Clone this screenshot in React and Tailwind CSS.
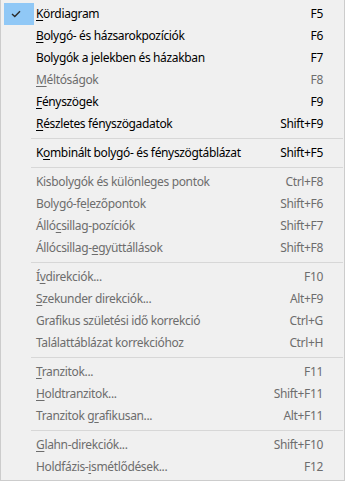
import React from "react";

const items = [
  { label: "Kördiagram", u: 0, key: "F5", checked: true },
  { label: "Bolygó- és házsarokpozíciók", u: 0, key: "F6" },
  { label: "Bolygók a jelekben és házakban", u: 10, key: "F7" },
  { label: "Méltóságok", u: 0, key: "F8", disabled: true },
  { label: "Fényszögek", u: 0, key: "F9" },
  { label: "Részletes fényszögadatok", u: 0, key: "Shift+F9" },
  "sep",
  { label: "Kombinált bolygó- és fényszögtáblázat", u: 1, key: "Shift+F5" },
  "sep",
  { label: "Kisbolygók és különleges pontok", key: "Ctrl+F8", disabled: true },
  { label: "Bolygó-felezőpontok", u: 9, key: "Shift+F6", disabled: true },
  { label: "Állócsillag-pozíciók", u: 4, key: "Shift+F7", disabled: true },
  { label: "Állócsillag-együttállások", u: 12, key: "Shift+F8", disabled: true },
  "sep",
  { label: "Ívdirekciók...", u: 1, key: "F10", disabled: true },
  { label: "Szekunder direkciók...", u: 0, key: "Alt+F9", disabled: true },
  { label: "Grafikus születési idő korrekció", key: "Ctrl+G", disabled: true },
  { label: "Találattáblázat korrekcióhoz", key: "Ctrl+H", disabled: true },
  "sep",
  { label: "Tranzitok...", u: 0, key: "F11", disabled: true },
  { label: "Holdtranzitok...", u: 0, key: "Shift+F11", disabled: true },
  { label: "Tranzitok grafikusan...", u: 11, key: "Alt+F11", disabled: true },
  "sep",
  { label: "Glahn-direkciók...", u: 0, key: "Shift+F10", disabled: true },
  { label: "Holdfázis-ismétlődések...", u: 10, key: "F12", disabled: true },
];

const Label = ({ text, u }) => {
  if (u === undefined) return <span>{text}</span>;
  return (
    <span>
      {text.slice(0, u)}
      <span className="underline underline-offset-2">{text[u]}</span>
      {text.slice(u + 1)}
    </span>
  );
};

const MenuItem = ({ item }) => (
  <div
    className={`flex h-[22px] items-center ${
      item.disabled ? "text-[#6d6d6d]" : "text-black"
    }`}
  >
    <div className="w-[35px] h-full pl-[3px] shrink-0">
      {item.checked && (
        <div className="w-[30px] h-full bg-[#90c8f6] flex items-center pl-[7px]">
          <svg width="10" height="8" viewBox="0 0 10 8" fill="none">
            <path d="M1 4 L3.8 6.6 L9 1.2" stroke="#2b2b2b" strokeWidth="1.4" />
          </svg>
        </div>
      )}
    </div>
    <div className="flex-1 whitespace-nowrap">
      <Label text={item.label} u={item.u} />
    </div>
    <div className="pr-[21px] whitespace-nowrap">{item.key}</div>
  </div>
);

export default function App() {
  return (
    <div
      className="w-[345px] h-[481px] bg-[#f0f0f0] border-x border-b border-[#cccccc] pt-[3px] text-[12px] leading-none tracking-[-0.35px]"
      style={{ fontFamily: '"Noto Sans", "Open Sans", sans-serif' }}
    >
      {items.map((item, i) =>
        item === "sep" ? (
          <div key={i} className="h-[7px] flex items-center pl-[30px] pr-[1px]">
            <div className="h-px w-full bg-[#d7d7d7]" />
          </div>
        ) : (
          <MenuItem key={i} item={item} />
        )
      )}
    </div>
  );
}
